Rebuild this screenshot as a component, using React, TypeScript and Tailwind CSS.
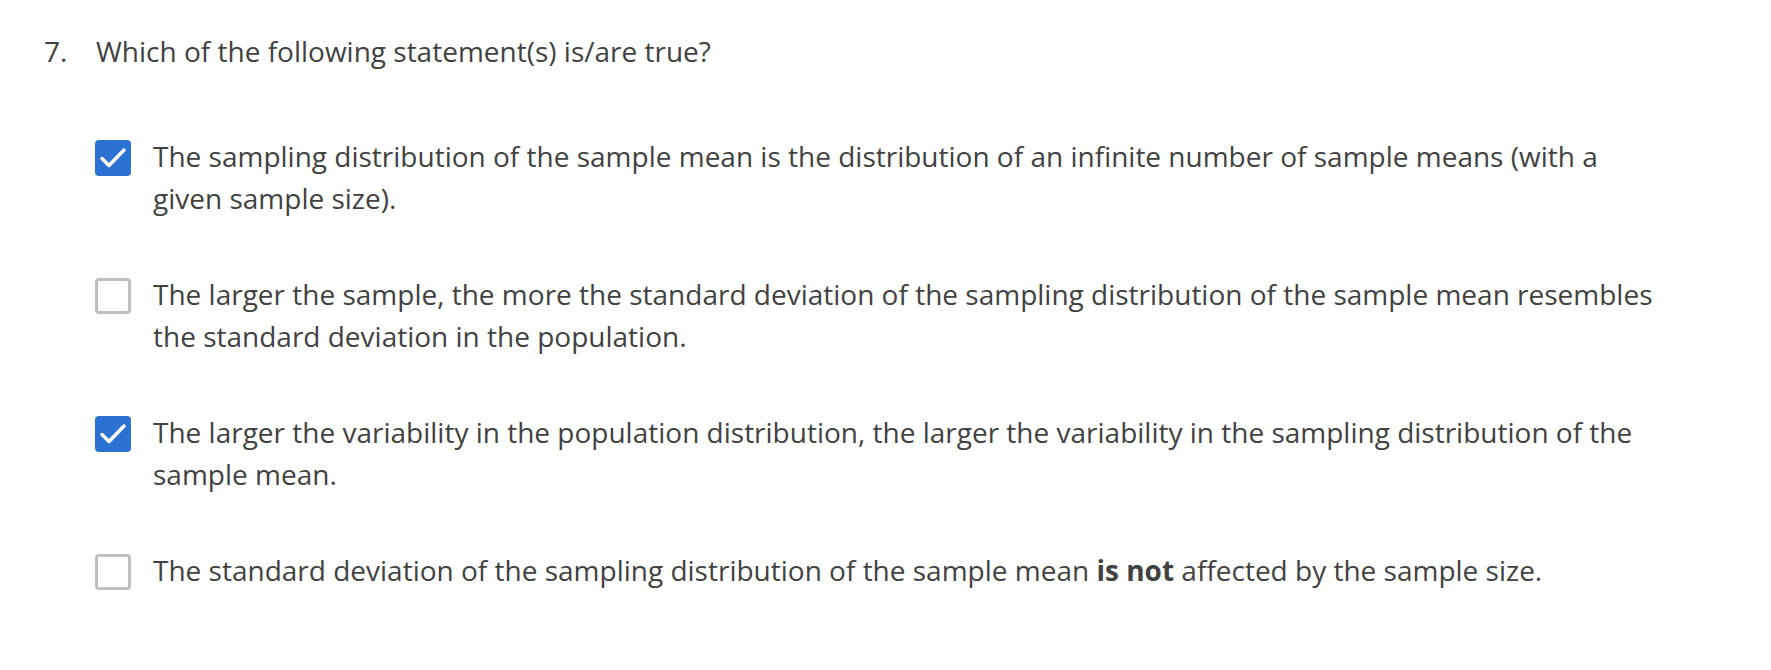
import React from "react";

type Option = {
  id: number;
  checked: boolean;
  text: React.ReactNode;
};

const options: Option[] = [
  {
    id: 1,
    checked: true,
    text: "The sampling distribution of the sample mean is the distribution of an infinite number of sample means (with a given sample size).",
  },
  {
    id: 2,
    checked: false,
    text: "The larger the sample, the more the standard deviation of the sampling distribution of the sample mean resembles the standard deviation in the population.",
  },
  {
    id: 3,
    checked: true,
    text: "The larger the variability in the population distribution, the larger the variability in the sampling distribution of the sample mean.",
  },
  {
    id: 4,
    checked: false,
    text: (
      <>
        The standard deviation of the sampling distribution of the sample mean <b className="font-bold">is not</b> affected by the sample size.
      </>
    ),
  },
];

function CheckBox({ checked }: { checked: boolean }) {
  if (checked) {
    return (
      <div className="w-[36px] h-[36px] rounded-[4px] bg-[#2c72d2] shrink-0">
        <svg width="36" height="36" viewBox="0 0 36 36" fill="none">
          <path d="M7 18.5l7 7L29 10" stroke="white" strokeWidth="3.5" strokeLinecap="round" strokeLinejoin="round" />
        </svg>
      </div>
    );
  }
  return <div className="w-[36px] h-[36px] rounded-[4px] border-[3px] border-[#bfbfbf] bg-white shrink-0" />;
}

export default function App() {
  return (
    <main className="w-[1771px] h-[670px] bg-white text-[#424242] font-['Open_Sans',sans-serif] text-[28px] leading-[42px]">
      <div className="flex pt-[30px] pl-[44px]">
        <span className="w-[52px]">7.</span>
        <span>Which of the following statement(s) is/are true?</span>
      </div>
      <div className="flex flex-col gap-[54px] pt-[63px] pl-[95px]">
        {options.map((o) => (
          <div key={o.id} className="flex gap-[22px]">
            <div className="pt-[5px]">
              <CheckBox checked={o.checked} />
            </div>
            <p className="w-[1512px]">{o.text}</p>
          </div>
        ))}
      </div>
    </main>
  );
}
